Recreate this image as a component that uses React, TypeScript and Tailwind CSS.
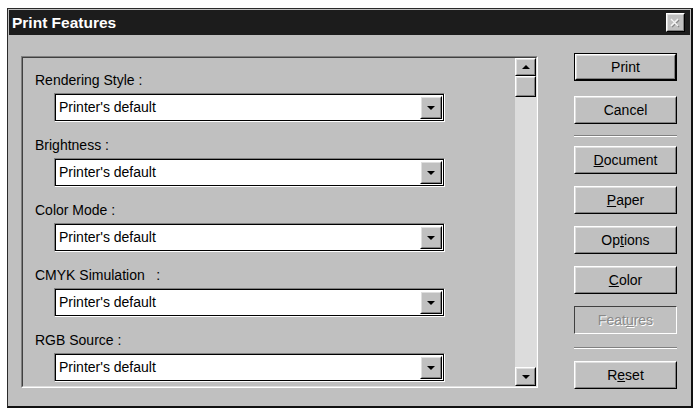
// ============================================
// Print Features dialog
// Classic 3D-bevel window with option dropdowns
// ============================================

import type { ReactNode } from 'react';

const FONT = { fontFamily: '"Liberation Sans", Arial, sans-serif' };

const OPTIONS = [
  'Rendering Style :',
  'Brightness :',
  'Color Mode :',
  'CMYK Simulation   :',
  'RGB Source :',
];

function DownTriangle() {
  return (
    <svg width="8" height="4" viewBox="0 0 8 4">
      <polygon points="0,0 8,0 4,4" fill="#000" />
    </svg>
  );
}

function UpTriangle() {
  return (
    <svg width="8" height="4" viewBox="0 0 8 4">
      <polygon points="0,4 8,4 4,0" fill="#000" />
    </svg>
  );
}

// Raised bevel: white/black outside, light/dark gray inside
function Raised({ children, className = '' }: { children?: ReactNode; className?: string }) {
  return (
    <div className={`border border-t-white border-l-white border-r-black border-b-black ${className}`}>
      <div className="w-full h-full border border-t-[#dfdfdf] border-l-[#dfdfdf] border-r-[#808080] border-b-[#808080] bg-[#c0c0c0] flex items-center justify-center">
        {children}
      </div>
    </div>
  );
}

function Dropdown() {
  return (
    <div className="ml-[31px] mt-[5px] w-[391px] h-[29px] border border-t-[#808080] border-l-[#808080] border-r-white border-b-white">
      <div className="w-full h-full border border-black bg-white flex items-stretch py-px pr-px">
        <span className="flex-1 flex items-center pl-[3px] text-[14px] text-black">Printer's default</span>
        <Raised className="w-[22px]">
          <DownTriangle />
        </Raised>
      </div>
    </div>
  );
}

function Scrollbar() {
  return (
    <div className="w-[21px] flex flex-col">
      <Raised className="h-[18px]">
        <UpTriangle />
      </Raised>
      <Raised className="h-[21px]" />
      <div className="flex-1 bg-[#dcdcdc]" />
      <Raised className="h-[19px]">
        <DownTriangle />
      </Raised>
    </div>
  );
}

function Btn({ children, className = '' }: { children: ReactNode; className?: string }) {
  return (
    <Raised className={`h-[28px] ${className}`}>
      <span className="text-[14px] text-black leading-none">{children}</span>
    </Raised>
  );
}

function Separator({ className = '' }: { className?: string }) {
  return (
    <div className={`h-[2px] border-t border-t-[#808080] border-b border-b-white ${className}`} />
  );
}

export default function App() {
  return (
    <div className="w-[698px] h-[412px] bg-white pl-[7px] pt-[8px]" style={FONT}>
      <div className="w-[686px] h-[400px] flex flex-col bg-[#c0c0c0] border-t border-l border-[#2a2a2a] border-r-2 border-b-2 border-r-[#111] border-b-[#111] p-px">
        {/* title bar */}
        <div className="h-[25px] bg-[#1c1c1c] flex items-center justify-between pl-[3px] pr-[5px]">
          <span className="text-white font-bold text-[15.5px] leading-none">Print Features</span>
          <Raised className="w-[19px] h-[19px]">
            <svg width="11" height="10" viewBox="0 0 11 10">
              <path d="M2 2 L9 9 M9 2 L2 9" stroke="#8a8a8a" strokeWidth="1.6" />
              <path d="M1 1 L8 8 M8 1 L1 8" stroke="#f4f4f4" strokeWidth="1.6" />
            </svg>
          </Raised>
        </div>

        <div className="flex pt-[18px] pl-[12px]">
          {/* option list */}
          <div className="mt-[3px] w-[517px] h-[332px] border border-t-[#808080] border-l-[#808080] border-r-white border-b-white">
            <div className="w-full h-full flex border border-t-[#404040] border-l-[#404040] border-r-[#dfdfdf] border-b-[#dfdfdf]">
              <div className="flex-1 pt-[14px]">
                {OPTIONS.map((label, i) => (
                  <div key={label} className={i > 0 ? 'mt-[15px]' : ''}>
                    <div className="ml-[12px] h-[16px] leading-4 text-[14px] text-black whitespace-pre">{label}</div>
                    <Dropdown />
                  </div>
                ))}
              </div>
              <Scrollbar />
            </div>
          </div>

          {/* action buttons */}
          <div className="ml-[36px] w-[103px] flex flex-col">
            <div className="h-[28px] border border-black">
              <Raised className="w-full h-full">
                <span className="text-[14px] text-black leading-none">Print</span>
              </Raised>
            </div>
            <Btn className="mt-[15px]">Cancel</Btn>
            <Separator className="mt-[11px]" />
            <Btn className="mt-[9px]"><u>D</u>ocument</Btn>
            <Btn className="mt-[12px]"><u>P</u>aper</Btn>
            <Btn className="mt-[12px]">Op<u>t</u>ions</Btn>
            <Btn className="mt-[12px]"><u>C</u>olor</Btn>
            <div className="mt-[12px] h-[28px] border border-t-[#404040] border-l-[#404040] border-r-white border-b-white flex items-center justify-center">
              <span className="text-[14px] leading-none text-[#8a8a8a] [text-shadow:1px_1px_0_#ffffff]">
                Feat<u>u</u>res
              </span>
            </div>
            <Separator className="mt-[13px]" />
            <Btn className="mt-[12px]">R<u>e</u>set</Btn>
          </div>
        </div>
      </div>
    </div>
  );
}
